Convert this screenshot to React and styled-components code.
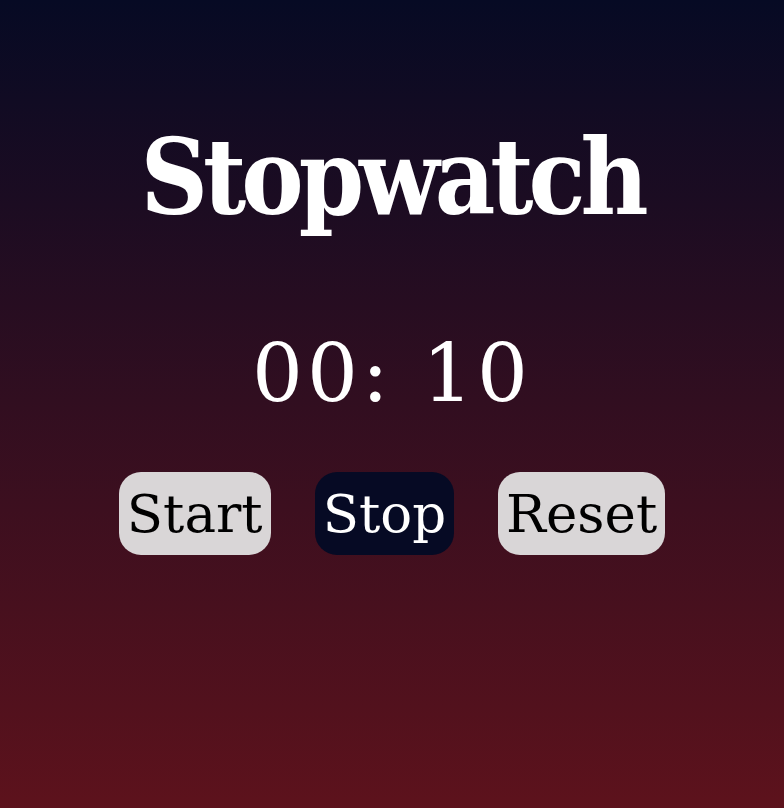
import React from "react";
import styled, { createGlobalStyle } from "styled-components";

const Global = createGlobalStyle`
  html, body { margin: 0; padding: 0; }
  body { font-family: "DejaVu Serif", serif; }
`;

const Page = styled.main`
  width: 784px;
  height: 808px;
  box-sizing: border-box;
  background: linear-gradient(180deg, #060a24 0%, #5d121c 100%);
  display: flex;
  flex-direction: column;
  align-items: center;
  padding-top: 113px;
  color: #fff;
`;

const Title = styled.h1`
  margin: 0;
  font-family: "DejaVu Serif Condensed", "DejaVu Serif", serif;
  font-stretch: semi-condensed;
  font-weight: 700;
  font-size: 104px;
  letter-spacing: -5px;
  line-height: 130px;
`;

const Time = styled.div`
  margin-top: 81px;
  font-family: "DejaVu Serif", serif;
  font-size: 80px;
  letter-spacing: 4px;
  line-height: 100px;
`;

const Controls = styled.div`
  margin-top: 48px;
  display: flex;
  gap: 44px;
`;

const Button = styled.button`
  font-family: "DejaVu Serif", serif;
  font-size: 53px;
  line-height: 83px;
  padding: 0 8px;
  border: none;
  border-radius: 22px;
  background: ${(p) => (p.$active ? "#060a24" : "#d9d6d7")};
  color: ${(p) => (p.$active ? "#fff" : "#000")};
`;

export default function App() {
  return (
    <>
      <Global />
      <Page>
        <Title>Stopwatch</Title>
        <Time>00: 10</Time>
        <Controls>
          <Button>Start</Button>
          <Button $active>Stop</Button>
          <Button>Reset</Button>
        </Controls>
      </Page>
    </>
  );
}
